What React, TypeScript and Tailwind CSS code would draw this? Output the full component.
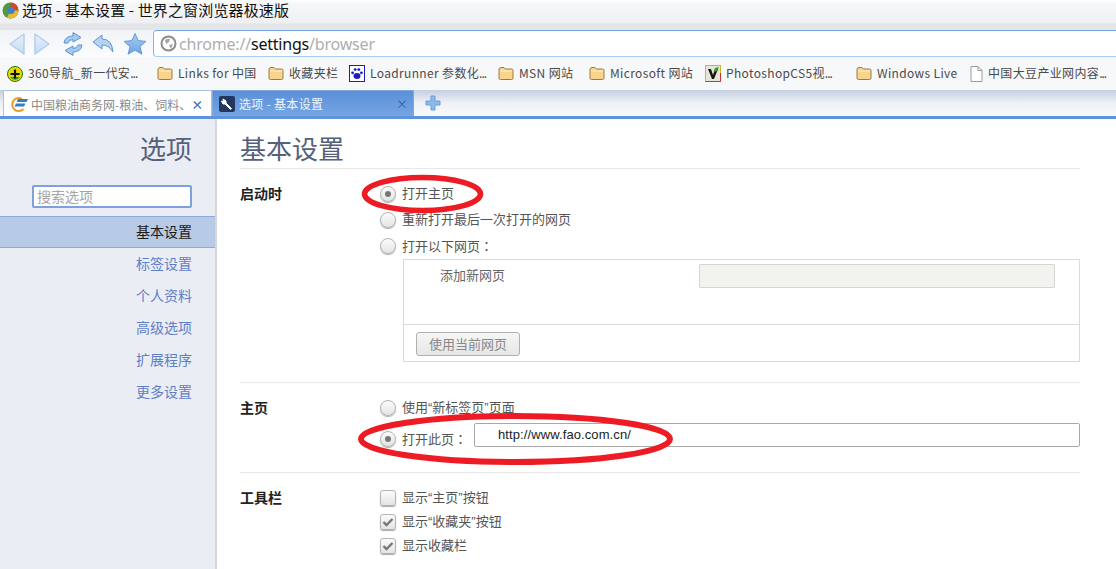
import type { ReactNode } from 'react';

const CJK = "font-['Noto_Sans_CJK_SC','Noto_Sans',sans-serif]";

function Folder() {
  return (
    <svg width="16" height="15" viewBox="0 0 16 15" className="shrink-0">
      <path d="M1 3.5 Q1 1.5 3 1.5 H6 L7.5 3 H13.5 Q15 3 15 4.5 V12 Q15 13.5 13.5 13.5 H2.5 Q1 13.5 1 12 Z" fill="#f8d48c" stroke="#9b7a45" />
      <path d="M2 5 H14" stroke="#fdeec8" />
    </svg>
  );
}

function Nav360() {
  return (
    <svg width="16" height="16" viewBox="0 0 16 16" className="shrink-0">
      <circle cx="8" cy="8" r="7.5" fill="#e8d800" stroke="#1d7a1d" />
      <path d="M3 11 A6 6 0 0 0 13 11 Z" fill="#2e9a2e" />
      <path d="M8 3.5 V12.5 M3.5 8 H12.5" stroke="#111" strokeWidth="2.2" />
    </svg>
  );
}

function Paw() {
  return (
    <svg width="16" height="17" viewBox="0 0 16 17" className="shrink-0">
      <rect x="0.5" y="0.5" width="15" height="16" fill="#fff" stroke="#1c1cc0" />
      <g fill="#1c1cc0">
        <ellipse cx="8" cy="11" rx="3.5" ry="3" />
        <circle cx="3.6" cy="7.8" r="1.4" />
        <circle cx="6.2" cy="4.6" r="1.4" />
        <circle cx="9.8" cy="4.6" r="1.4" />
        <circle cx="12.4" cy="7.8" r="1.4" />
      </g>
    </svg>
  );
}

function PsIcon() {
  return (
    <svg width="16" height="17" viewBox="0 0 16 17" className="shrink-0">
      <rect x="0.5" y="0.5" width="15" height="16" fill="#e8e6d8" stroke="#c8b830" />
      <path d="M0.5 16.5 H15.5 V8" fill="none" stroke="#d23030" />
      <path d="M3 4 L7 14 H9 L13 4 H10 L8 10 L6 4 Z" fill="#161616" />
      <path d="M8.5 7 L10 3 L13.5 2 L13 6 Z" fill="#3c9a2c" />
    </svg>
  );
}

function PageIcon() {
  return (
    <svg width="14" height="16" viewBox="0 0 14 16" className="shrink-0">
      <path d="M2 .5 H9 L13 4.5 V15.5 H2 Z" fill="#fff" stroke="#9a9a9a" />
      <path d="M9 .5 V4.5 H13" fill="none" stroke="#9a9a9a" />
    </svg>
  );
}

function Bookmark({ icon, label, width }: { icon: ReactNode; label: string; width: string }) {
  const cut = label.endsWith('...');
  return (
    <div className={`flex items-center gap-[5px] shrink-0 ${width}`}>
      {icon}
      <span className="pb-[2px] text-[12px] tracking-[0.35px] text-[#4a4a4a] whitespace-nowrap">
        {cut ? label.slice(0, -3) : label}
        {cut && <span className="tracking-[-1px]">...</span>}
      </span>
    </div>
  );
}

function Arrow({ flip }: { flip?: boolean }) {
  return (
    <svg width="18" height="24" viewBox="0 0 18 24" className={flip ? '' : '-scale-x-100'}>
      <defs>
        <linearGradient id="arrowFill" x1="0" y1="0" x2="0" y2="1">
          <stop offset="0" stopColor="#e8f1fb" />
          <stop offset="1" stopColor="#c4daf3" />
        </linearGradient>
      </defs>
      <path d="M2 2 L16 12 L2 22 Z" fill="url(#arrowFill)" stroke="#b3cdeb" strokeWidth="1.4" strokeLinejoin="round" />
    </svg>
  );
}

function Toolbar() {
  return (
    <div className="flex h-[27px] bg-gradient-to-b from-[#f1f3f7] to-[#fbfcfd]">
      <div className="flex items-center w-[153px] shrink-0 pl-[8px]">
        <Arrow />
        <div className="ml-[7px]">
          <Arrow flip />
        </div>
        {/* refresh */}
        <svg width="24" height="26" viewBox="0 0 24 26" className="ml-[10px]">
          <path d="M3 12 Q4 5 12 5 V1.5 L20 6.5 L12 11 V8.5 Q8 8.5 7 12 Z" fill="#a5caf0" stroke="#5a94d6" strokeLinejoin="round" />
          <path d="M21 14 Q20 21 12 21 V24.5 L4 19.5 L12 15 V17.5 Q16 17.5 17 14 Z" fill="#a5caf0" stroke="#5a94d6" strokeLinejoin="round" />
        </svg>
        {/* undo */}
        <svg width="22" height="22" viewBox="0 0 22 22" className="ml-[7px]">
          <path d="M1 9 L10 2 V6 Q20 6 21 19 Q17 12 10 12 V16 Z" fill="#b4d2f2" stroke="#5f97d6" strokeLinejoin="round" />
        </svg>
        {/* star */}
        <svg width="24" height="24" viewBox="0 0 24 24" className="ml-[9px]">
          <defs>
            <linearGradient id="starFill" x1="0" y1="0" x2="0" y2="1">
              <stop offset="0" stopColor="#a9cdf2" />
              <stop offset="1" stopColor="#6ea3e3" />
            </linearGradient>
          </defs>
          <path d="M12 1.5 L15.2 8.6 L23 9.4 L17 14.6 L18.9 22.2 L12 18.2 L5.1 22.2 L7 14.6 L1 9.4 L8.8 8.6 Z" fill="url(#starFill)" stroke="#6a9bd8" strokeLinejoin="round" />
        </svg>
      </div>
      <div className="flex-1 flex items-center gap-[2px] pl-[6px] bg-white border-l border-t border-b border-l-[#8eb4e6] border-t-[#74a3e2] border-b-[#a9cdf8] rounded-l-[4px]">
        <svg width="17" height="17" viewBox="0 0 17 17" className="shrink-0">
          <circle cx="8.5" cy="8.5" r="7" fill="#fff" stroke="#8d8d8d" strokeWidth="2" />
          <path d="M5 5 Q8 3 10 4 L9 7 L6 9 Z M9 10 L13 9 L11 14 Z" fill="#a5a5a5" />
        </svg>
        <span className="text-[16px] text-[#aeaeae] font-['Noto_Sans',sans-serif] tracking-[-0.2px]">
          chrome://<span className="text-[#111]">settings</span>/browser
        </span>
      </div>
    </div>
  );
}

function Tabs() {
  return (
    <div className="flex h-[29px] pl-[3px] bg-gradient-to-b from-[#c4cfe0] via-[#eef1f7] to-[#f8f9fc] border-b-[3px] border-b-[#5f94dc]">
      <div className="flex items-center w-[209px] pt-[2px] pl-[7px] pr-[11px] bg-white border-t border-x border-[#a9c2e4]">
        <svg width="18" height="16" viewBox="0 0 18 16" className="shrink-0">
          <path d="M11 2 A6.5 6.5 0 1 0 12.5 12" fill="none" stroke="#f09a2c" strokeWidth="2" />
          <path d="M7 2 H17 L15.5 5 H5.5 Z M5 6.5 H14.5 L13 9.5 H3.5 Z" fill="#2f7fc4" />
        </svg>
        <span className="ml-[2px] flex-1 text-[12px] text-[#8a8a8a] whitespace-nowrap">中国粮油商务网-粮油、饲料、</span>
        <span className="text-[12px] leading-none font-bold text-[#3f6fb8]">×</span>
      </div>
      <div className="flex items-center w-[202px] pt-[2px] pl-[6px] pr-[5px] bg-gradient-to-b from-[#5b90d8] to-[#74a4e2] border border-[#7fa8df]">
        <svg width="16" height="16" viewBox="0 0 16 16" className="shrink-0">
          <rect width="16" height="16" rx="2" fill="#22365e" />
          <path d="M4 3 L7 5 V7 L12.5 12.5 L11.5 13.5 L6 8 H4 L2.5 5 L4.5 6 Z" fill="#fff" stroke="#fff" />
        </svg>
        <span className="ml-[4px] flex-1 text-[12px] tracking-[0.3px] text-[#eef4fc] whitespace-nowrap">选项 - 基本设置</span>
        <span className="text-[12px] leading-none text-[#2f5fa8]">×</span>
      </div>
      <svg width="16" height="16" viewBox="0 0 16 16" className="ml-[11px] mt-[5px]">
        <path d="M6 1 H10 V6 H15 V10 H10 V15 H6 V10 H1 V6 H6 Z" fill="#8db8ea" stroke="#6d9fdc" />
      </svg>
    </div>
  );
}

const NAV = ['基本设置', '标签设置', '个人资料', '高级选项', '扩展程序', '更多设置'];

function Sidebar() {
  return (
    <aside className="w-[217px] shrink-0 bg-[#eaeef4] border-r-2 border-r-[#d3d6dc] flex flex-col">
      <h2 className="mt-[10px] pr-[23px] text-right text-[26px] leading-[38px] font-normal text-[#55607a]">选项</h2>
      <div className="mt-[18px] ml-[32px] w-[160px] h-[23px] bg-white border-2 border-[#7f9fdf] rounded-[2px] flex items-center pl-[3px] text-[14px] text-[#a5a5a5]">搜索选项</div>
      <nav className="mt-[8px] flex flex-col">
        {NAV.map((n, i) => (
          <div
            key={n}
            className={
              i === 0
                ? 'h-[32px] pb-[2px] flex items-center justify-end pr-[23px] text-[14px] text-[#1a1a1a] bg-[#b7cbe7] border-y border-[#8fa9dc]'
                : 'h-[32px] pb-[2px] flex items-center justify-end pr-[23px] text-[14px] text-[#5f7fc8]'
            }
          >
            {n}
          </div>
        ))}
      </nav>
    </aside>
  );
}

function Radio({ checked }: { checked?: boolean }) {
  return (
    <span className="w-[16px] h-[16px] shrink-0 rounded-full border border-[#b4b4b4] bg-gradient-to-b from-[#fbfbfb] to-[#e4e4e4] shadow-[0_1px_1px_#aaa] flex items-center justify-center">
      {checked && <span className="w-[6px] h-[6px] rounded-full bg-[#777]" />}
    </span>
  );
}

function Check({ checked }: { checked?: boolean }) {
  return (
    <span className="w-[16px] h-[16px] shrink-0 rounded-[3px] border border-[#b4b4b4] bg-gradient-to-b from-[#fbfbfb] to-[#e4e4e4] shadow-[0_1px_1px_#aaa] flex items-center justify-center">
      {checked && (
        <svg width="12" height="10" viewBox="0 0 12 10">
          <path d="M1.5 5 L4.5 8 L10.5 2" fill="none" stroke="#777" strokeWidth="2.4" />
        </svg>
      )}
    </span>
  );
}

// centred full-width colon, as the Windows font draws it
function Colon() {
  return <span className="font-['Noto_Sans_CJK_TC',sans-serif]">：</span>;
}

function Option({ control, label }: { control: ReactNode; label: ReactNode }) {
  return (
    <div className="flex items-center gap-[6px] h-[26px] text-[13px] text-[#555] font-['Liberation_Sans','Noto_Sans_CJK_SC',sans-serif]">
      {control}
      <span>{label}</span>
    </div>
  );
}

function Section({ title, children, last }: { title: string; children: ReactNode; last?: boolean }) {
  return (
    <section className={last ? 'flex' : 'flex border-b border-[#e8e8e8]'}>
      <h3 className={`w-[140px] shrink-0 text-[14px] font-bold text-[#222] ${last ? 'leading-[22px]' : 'leading-[24px]'}`}>{title}</h3>
      <div className="flex-1">{children}</div>
    </section>
  );
}

function Main() {
  return (
    <main className="flex-1 pl-[23px] pr-[36px]">
      <h1 className="mt-[10px] h-[40px] leading-[38px] text-[26px] font-normal text-[#55607a] border-b border-[#e8e8e8]">基本设置</h1>
      <div className="pt-[12px]">
        <Section title="启动时">
          <Option control={<Radio checked />} label="打开主页" />
          <Option control={<Radio />} label="重新打开最后一次打开的网页" />
          <Option control={<Radio />} label={<>打开以下网页<Colon /></>} />
          <div className="ml-[23px] mb-[20px] h-[103px] border border-[#d9d9d9] flex flex-col text-[13px] text-[#666]">
            <div className="h-[65px] flex items-start pt-[4px] pl-[36px] pr-[24px] border-b border-[#d9d9d9]">
              <span className="w-[259px] leading-[22px]">添加新网页</span>
              <div className="flex-1 h-[24px] bg-[#f2f2ee] border border-[#d5d5d5] rounded-[2px]" />
            </div>
            <div className="h-[36px] pl-[12px] pt-[7px]">
              <div className="w-[104px] h-[24px] pb-[1px] rounded-[3px] border border-[#b0b0b0] bg-gradient-to-b from-[#f6f6f6] to-[#e6e6e6] flex items-center justify-center text-[#888]">使用当前网页</div>
            </div>
          </div>
        </Section>
        <div className="pt-[12px]">
          <Section title="主页">
            <Option control={<Radio />} label="使用“新标签页”页面" />
            <div className="flex items-start mt-[2px] mb-[25px] h-[24px] text-[13px] text-[#555]">
              <div className="flex items-center gap-[6px] h-[16px] mt-[8px] w-[94px]">
                <Radio checked />
                <span className="whitespace-nowrap">打开此页<Colon /></span>
              </div>
              <div className="flex-1 h-[24px] pl-[23px] border border-[#a8a8a8] rounded-[2px] flex items-center text-[13px] tracking-[0.1px] text-[#222] font-['Liberation_Sans',sans-serif]">http://www.fao.com.cn/</div>
            </div>
          </Section>
        </div>
        <div className="pt-[13px]">
          <Section title="工具栏" last>
            <div className="flex flex-col [&>div]:h-[24px]">
              <Option control={<Check />} label="显示“主页”按钮" />
              <Option control={<Check checked />} label="显示“收藏夹”按钮" />
              <Option control={<Check checked />} label="显示收藏栏" />
            </div>
          </Section>
        </div>
      </div>
    </main>
  );
}

export default function App() {
  return (
    <div className={`relative h-[569px] w-full overflow-hidden bg-white flex flex-col ${CJK}`}>
      {/* title bar */}
      <div className="flex items-center h-[30px] pl-[2px] pb-[9px] bg-[linear-gradient(to_bottom,#ffffff_0,#f6f7f9_12%,#eff0f3_75%,#e3e5e9_80%,#e3e5e9_100%)]">
        <svg width="17" height="17" viewBox="0 0 17 17" className="shrink-0">
          <circle cx="8.5" cy="8.5" r="8" fill="#4f9a3a" />
          <path d="M8.5 .5 A8 8 0 0 1 16.5 8.5 L8.5 8.5 Z" fill="#d8452e" />
          <path d="M16.5 8.5 A8 8 0 0 1 5 15.7 L8.5 8.5 Z" fill="#e8b830" />
          <circle cx="9" cy="8.5" r="3.6" fill="#3d80d0" />
        </svg>
        <span className="ml-[3px] text-[15px] tracking-[0.15px] text-[#111] whitespace-nowrap">选项 - 基本设置 - 世界之窗浏览器极速版</span>
      </div>
      <Toolbar />
      {/* bookmarks */}
      <div className="flex items-center h-[33px] pl-[7px] bg-[#f7f8fa]">
        <Bookmark width="w-[150px]" icon={<Nav360 />} label="360导航_新一代安..." />
        <Bookmark width="w-[111px]" icon={<Folder />} label="Links for 中国" />
        <Bookmark width="w-[81px]" icon={<Folder />} label="收藏夹栏" />
        <Bookmark width="w-[149px]" icon={<Paw />} label="Loadrunner 参数化..." />
        <Bookmark width="w-[91px]" icon={<Folder />} label="MSN 网站" />
        <Bookmark width="w-[116px]" icon={<Folder />} label="Microsoft 网站" />
        <Bookmark width="w-[151px]" icon={<PsIcon />} label="PhotoshopCS5视..." />
        <Bookmark width="w-[113px]" icon={<Folder />} label="Windows Live" />
        <Bookmark width="w-[130px]" icon={<PageIcon />} label="中国大豆产业网内容..." />
      </div>
      <Tabs />
      <div className="flex flex-1 min-h-0">
        <Sidebar />
        <Main />
      </div>
      {/* red hand-drawn marks over the page */}
      <svg width="1116" height="569" viewBox="0 0 1116 569" className="absolute inset-0 pointer-events-none">
        <ellipse cx="422.5" cy="194" rx="58" ry="16.5" fill="none" stroke="#ed1c24" strokeWidth="5.5" />
        <ellipse cx="515.5" cy="439" rx="154.5" ry="23" fill="none" stroke="#ed1c24" strokeWidth="6" />
      </svg>
    </div>
  );
}
